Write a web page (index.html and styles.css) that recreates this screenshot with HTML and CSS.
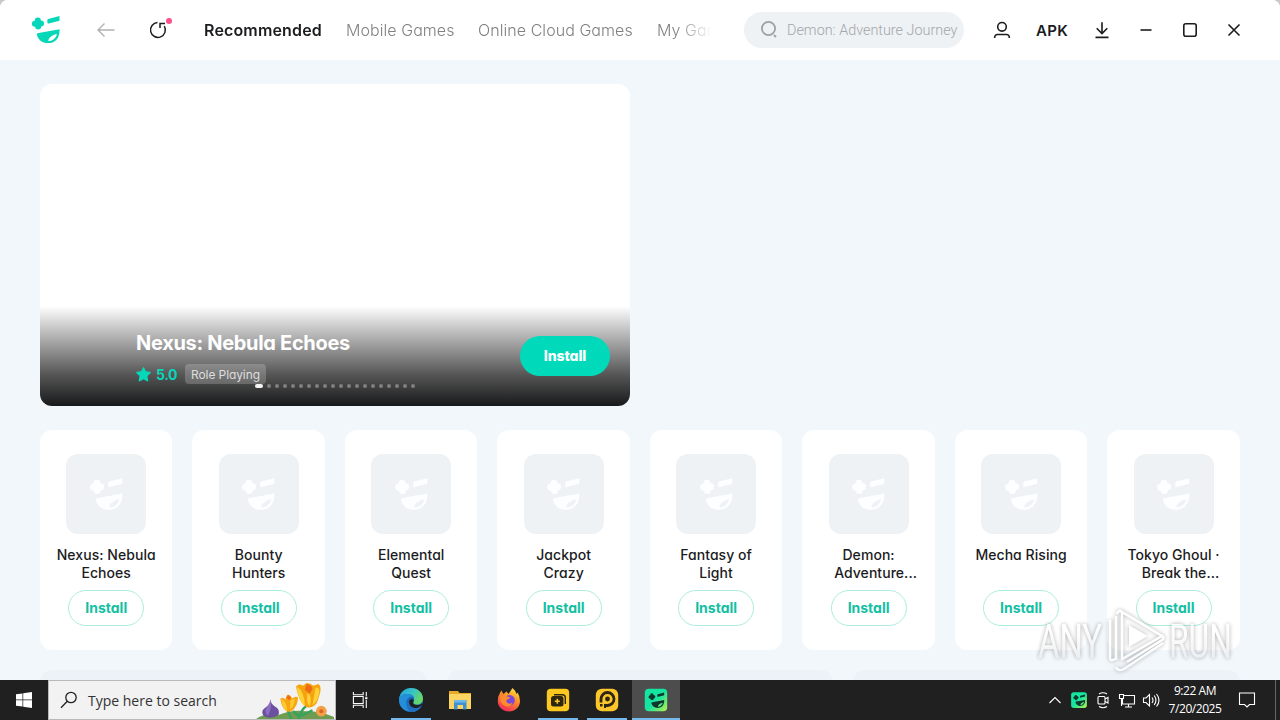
FILE: index.html
```html
<!DOCTYPE html>
<html lang="en">
<head>
    <meta charset="UTF-8">
    <meta name="viewport" content="width=device-width, initial-scale=1.0">
    <title>Game Center</title>
    <link rel="stylesheet" href="styles.css">
</head>
<body>

<svg class="defs" width="0" height="0">
    <symbol id="face" viewBox="0 0 30 30">
        <circle cx="6.800" cy="5.400" r="3"/>
        <circle cx="10" cy="8.400" r="3"/>
        <circle cx="7.200" cy="11.600" r="3"/>
        <circle cx="3.900" cy="8.800" r="3"/>
        <path d="M4.500 6l4.800-.2 1 5-5 1.200z"/>
        <path d="M17.200 3.900 28.500 1v4.800l-10.600 2.700c-1 .2-1.500-.1-1.500-1V5c0-.6.300-1 .8-1.100z"/>
        <path fill-rule="evenodd" d="M7.600 17.900l21-3.700c.2 8.500-3.900 13.900-11.500 13.900-5.500 0-9.400-2.700-11.200-8.200-.3-1.100.4-1.800 1.700-2zM17.300 25.700c2.700 1 7.800-1.800 8.600-6.700-3.700.7-8.100 3.200-8.600 6.700z"/>
    </symbol>
</svg>

<div class="window">
    <header class="topbar">
        <svg class="logo"><use href="#face"/></svg>
        <svg class="back" viewBox="0 0 20 20"><path d="M18.500 10H2M8.500 3.500L2 10l6.500 6.500"/></svg>
        <div class="refresh">
            <svg viewBox="0 0 20 20"><path d="M9.500 2.600A7.400 7.400 0 1 0 16.300 6.200M12 8V3.400h5"/></svg>
            <span class="dot"></span>
        </div>
        <nav class="tabs">
            <a class="tab active">Recommended</a>
            <a class="tab mobile">Mobile Games</a>
            <a class="tab cloud">Online Cloud Games</a>
            <a class="tab">My Games</a>
        </nav>
        <div class="search">
            <svg viewBox="0 0 20 20"><circle cx="9.500" cy="8.500" r="6.600"/><path d="M15 15l2 2"/></svg>
            <span>Demon: Adventure Journey</span>
        </div>
        <div class="controls">
            <svg viewBox="0 0 20 20"><circle cx="10" cy="6.800" r="4.300"/><path d="M2.700 18v-.8a2.700 2.700 0 0 1 2.700-2.700h9.200a2.700 2.700 0 0 1 2.700 2.700v.8"/></svg>
            <span class="apk">APK</span>
            <svg viewBox="0 0 20 20"><path d="M10 2.300v11M4.700 8.200l5.300 5.300 5.300-5.300M3.500 17.400h13"/></svg>
            <svg viewBox="0 0 20 20"><path d="M4.500 10h11"/></svg>
            <svg viewBox="0 0 20 20"><rect x="3.800" y="3.800" width="12.400" height="12.400" rx="2"/></svg>
            <svg viewBox="0 0 20 20"><path d="M4.500 4.500l11 11M15.500 4.500l-11 11"/></svg>
        </div>
    </header>

    <main class="content">
        <section class="hero">
            <div class="hero-info">
                <div>
                    <h1>Nexus: Nebula Echoes</h1>
                    <div class="meta">
                        <svg class="star" viewBox="0 0 16 16"><path d="M7.200.8c.3-.7 1.300-.7 1.600 0l1.700 3.800 4.400.5c.8.100 1.100 1 .5 1.500l-3.200 3 .9 4.700c.1.800-.6 1.300-1.300.9L8 13l-3.800 2.200c-.7.400-1.500-.1-1.300-.9l.8-4.600L.500 6.600c-.5-.5-.2-1.400.5-1.500l4.400-.5z"/></svg>
                        <span class="score">5.0</span>
                        <span class="tag">Role Playing</span>
                    </div>
                </div>
                <button class="install-main">Install</button>
            </div>
            <div class="pager">
                <i class="on"></i><i></i><i></i><i></i><i></i><i></i><i></i><i></i><i></i><i></i>
                <i></i><i></i><i></i><i></i><i></i><i></i><i></i><i></i><i></i><i></i>
            </div>
        </section>

        <section class="games">
            <article class="card">
                <div class="thumb"><svg><use href="#face"/></svg></div>
                <h2>Nexus: Nebula<br>Echoes</h2>
                <button>Install</button>
            </article>
            <article class="card">
                <div class="thumb"><svg><use href="#face"/></svg></div>
                <h2>Bounty<br>Hunters</h2>
                <button>Install</button>
            </article>
            <article class="card">
                <div class="thumb"><svg><use href="#face"/></svg></div>
                <h2>Elemental<br>Quest</h2>
                <button>Install</button>
            </article>
            <article class="card">
                <div class="thumb"><svg><use href="#face"/></svg></div>
                <h2>Jackpot<br>Crazy</h2>
                <button>Install</button>
            </article>
            <article class="card">
                <div class="thumb"><svg><use href="#face"/></svg></div>
                <h2>Fantasy of<br>Light</h2>
                <button>Install</button>
            </article>
            <article class="card">
                <div class="thumb"><svg><use href="#face"/></svg></div>
                <h2>Demon:<br><span class="cut">Adventure...</span></h2>
                <button>Install</button>
            </article>
            <article class="card">
                <div class="thumb"><svg><use href="#face"/></svg></div>
                <h2>Mecha Rising</h2>
                <button>Install</button>
            </article>
            <article class="card">
                <div class="thumb"><svg><use href="#face"/></svg></div>
                <h2>Tokyo Ghoul ·<br><span class="cut">Break the...</span></h2>
                <button>Install</button>
            </article>
        </section>

        <section class="lists">
            <div class="list"></div>
            <div class="list"></div>
            <div class="list"></div>
        </section>
    </main>
</div>

<!-- watermark -->
<svg class="watermark" viewBox="0 0 210 74">
    <defs>
        <linearGradient id="fade" x2="0" y2="1"><stop offset=".3" stop-color="#fff"/><stop offset="1" stop-color="#dfe2e5"/></linearGradient>
    </defs>
    <g class="mark-text">
        <text x="8" y="54" textLength="64" lengthAdjust="spacingAndGlyphs">ANY</text>
        <text x="139" y="54" textLength="63" lengthAdjust="spacingAndGlyphs">RUN</text>
    </g>
    <g class="mark-line">
        <path d="M86 12v44M80 16v38q0 4 5 1M92 8v47l40-23zM92 8q-3-3-5 2M132 32q3 1 0 4L97 58M133 39L94 65q-6 3-8-2"/>
    </g>
    <path class="mark-fill" d="M99 21v22l19-11z"/>
</svg>

<footer class="taskbar">
    <div class="start">
        <svg viewBox="0 0 16 16"><path d="M0 2.300l6.500-.9v6.200H0zM7.200 1.300L16 0v7.600H7.200zM0 8.300h6.500v6.300L0 13.700zM7.200 8.300H16V16l-8.800-1.300z"/></svg>
    </div>
    <div class="taskbar-search">
        <svg class="lens" viewBox="0 0 18 18"><circle cx="11" cy="6.500" r="5.200"/><path d="M7.300 10.200L1 16.700"/></svg>
        <span>Type here to search</span>
        <svg class="flowers" viewBox="0 0 80 39">
            <path fill="#6f9c50" d="M0 39q9-7 23-4 14-6 28-4 16 0 29 6v2z"/>
            <path fill="none" stroke="#37a35c" stroke-width="2.500" d="M36 39l-4-11M44 39q1-8 8-14M44 36l-6-5M46 36l12-6"/>
            <path fill="#6b4fa0" d="M15 19q-1 6-5 8-6 4-2 9 7 4 15-1 2-6-4-9-4-3-4-7z"/>
            <path fill="#8d70bd" d="M15 19q2 8-3 17-4-4-1-9 3-3 4-8z"/>
            <path fill="#f8a513" d="M25 18q3-2 5 1l2-5q4 0 5 4 4-3 6-1 0 6-3 10-3 6-9 4-5-4-6-13z"/>
            <path fill="#fccb2d" d="M26 18q6 4 6 13-5-2-6-13zM35 20l5-2q-1 9-5 11z"/>
            <path fill="#f5a30e" d="M41 6q3-4 7-1l4-3q4 0 7 3l5-2q3 2 2 8-2 8-4 12-4 5-10 4-8-5-11-21z"/>
            <path fill="#ffd23a" d="M42 6q8 5 8 20-7-5-8-20zM53 12q5 3 2 14-4-5-2-14zM61 7q4-1 4 4-1 9-7 14z"/>
            <path fill="#ef6c16" d="M52 3q5 1 6 5l-3 5-5-4zM33 14l3 3-2 3-3-3z"/>
            <circle cx="67" cy="31" r="5.500" fill="#f3a046"/><circle cx="67" cy="31" r="2" fill="#db6424"/>
        </svg>
    </div>
    <div class="apps">
        <div class="app">
            <svg class="taskview" viewBox="0 0 18 18"><path d="M1 0v3h11V0M1 18v-3h11v3M1 5h11v8H1zM15.500 0v5M15.500 9v9"/><path stroke-width="2.200" d="M14.200 7h2.600"/></svg>
        </div>
        <div class="app open">
            <svg class="i24" viewBox="0 0 24 24">
                <defs>
                    <linearGradient id="edgeTop" x1="0" y1="0" x2="1" y2=".4"><stop offset="0" stop-color="#239fe0"/><stop offset=".6" stop-color="#39c6c4"/><stop offset="1" stop-color="#66d667"/></linearGradient>
                </defs>
                <circle cx="12" cy="12" r="12" fill="#1768b8"/>
                <path fill="url(#edgeTop)" d="M0 11.500C1 4 6 0 12 0c7 0 12 5 12 10.500 0 4-3 6-6 6-3.500 0-4.500-1.500-3.500-3 2-4-1-7.500-6-7.500-4 0-7.500 2-8.500 5.500z"/>
                <path fill="#248fd8" d="M0 12c0-4 4-6 8-6 3 0 5 1 6 3-3-1-6 1-6.500 4-.7 5 3.500 9 8.500 9.300C8 26 0 20 0 12z"/>
                <path fill="#202020" d="M14.500 13.500c-1 2 .5 3.500 4 3.500 1.500 0 3-.4 4-1.200.8-.5 1.300 0 .8.900-2 2.600-4.700 3.300-7.300 3.300-4 0-6.500-3-6-6 .3-2 1.500-3 2.700-3 1.500 0 2.400 1 1.800 2.500z"/>
                <path fill="#1f6fbe" d="M10 14c0 3.500 3 6.400 7 6.200 2.300-.1 4.700-1.200 5.800-2.800C21 21.500 17 24 12.500 24 9 23 7 19 7.500 15z"/>
            </svg>
        </div>
        <div class="app">
            <svg class="i24" viewBox="0 0 24 24"><path fill="#e9a928" d="M1 3h9l1.500 2H23v4H1z"/><path fill="#fcd462" d="M1 6h22v15H1z"/><path fill="#3f91d2" d="M6 12h12.500v9.500H15V17H9.500v4.500H6z"/><path fill="#6db7eb" d="M6 12h12.500v2.500H6z"/></svg>
        </div>
        <div class="app">
            <svg class="i24" viewBox="0 0 24 24">
                <defs><linearGradient id="fox" x1=".8" y1="0" x2=".3" y2="1"><stop offset="0" stop-color="#ffe845"/><stop offset=".4" stop-color="#ff9427"/><stop offset="1" stop-color="#f2285c"/></linearGradient></defs>
                <path fill="url(#fox)" d="M3 5l1.200-2.500L6.500 6l3-2.500 2 2.500 2-3 2-3q3 2.500 4 6l1-1.500Q23 8 23 13c0 6-5 10.500-11 10.500S.8 19 .8 13Q.8 8 3 5z"/>
                <circle cx="12.500" cy="12.300" r="5.300" fill="#7a48d8"/>
                <path fill="#ff8b2c" d="M3 9q3-3 7-.5 2 .5 3 1-.5 2-3 2-1.500 2 .5 3.500 3 1.500 5-.5-1 4-5.500 4C5 18 3 13 3 9z"/>
            </svg>
        </div>
        <div class="app open">
            <svg class="i24" viewBox="0 0 24 24"><rect x=".8" y=".8" width="22.400" height="22.400" rx="4" fill="#fdc81f"/><path fill="none" stroke="#2c2613" stroke-width="1.400" d="M8 6.700h8.500q2.800 0 2.800 2.800v6.500"/><rect x="5" y="8" width="12.500" height="10.500" rx="2.500" fill="#2c2613"/><path stroke="#fdc81f" stroke-width="1.500" d="M11.300 10.700v5M8.800 13.200h5"/></svg>
        </div>
        <div class="app open">
            <svg class="i24" viewBox="0 0 24 24"><rect x=".8" y=".8" width="22.400" height="22.400" rx="6" fill="#fdc62b"/><path fill="none" stroke="#2c2613" stroke-width="2.800" d="M6 14.500V11a6.500 6.500 0 1 1 6.500 6.500H10"/><circle cx="12.500" cy="11" r="2.400" fill="#2c2613"/><path fill="#2c2613" d="M5 16h2.500v2.500H5zM9 16h2v4H9z"/></svg>
        </div>
        <div class="app open current">
            <svg class="i24 game" viewBox="0 0 24 24"><defs><linearGradient id="gc" x2="1" y2="1"><stop offset=".5" stop-color="#14e6a1"/><stop offset="1" stop-color="#b8f04c"/></linearGradient></defs><rect x=".8" y=".8" width="22.400" height="22.400" rx="4" fill="url(#gc)"/><use href="#face" x="4" y="4" width="17" height="17"/></svg>
        </div>
    </div>
    <div class="tray">
        <svg viewBox="0 0 18 18"><path d="M3.500 12L9 6.500l5.500 5.500"/></svg>
        <svg class="game" viewBox="0 0 24 24"><rect x="1.500" y="1.500" width="21" height="21" rx="3.500" fill="url(#gc)"/><use href="#face" x="4" y="4" width="17" height="17"/></svg>
        <svg viewBox="0 0 18 18"><rect x="4" y="5.500" width="7" height="7.500" rx="1"/><path d="M11 8l3-1.500V12l-3-1.500M5 3q4-2.500 8 0M5 15.500q4 2.500 8 0"/></svg>
        <svg viewBox="0 0 18 18"><path d="M5.500 4.500h11V13H4.500V8M10.500 13v3M7 16h7M1.500 3.500h4v4h-4zM3.500 7.500V15"/></svg>
        <svg viewBox="0 0 18 18"><path d="M1.500 7v4.500H4l3.500 3.500V3.500L4 7zM10 6.500q2 2.700 0 5.500M12.200 4.500q3.500 4.700 0 9.500M14.500 3q5 6.200 0 12.500"/></svg>
        <div class="clock">9:22 AM<br>7/20/2025</div>
        <svg class="note" viewBox="0 0 18 18"><path d="M1.500 2h15v11.500h-5L9 16l-2.500-2.500h-5z"/></svg>
    </div>
</footer>

</body>
</html>
```
FILE: styles.css
```css
* {
    box-sizing: border-box;
}

body {
    margin: 0;
    width: 1280px;
    height: 720px;
    overflow: hidden;
    background: #c8c8c8;
    font-family: Inter, "Open Sans", sans-serif;
    font-feature-settings: "cv11";
    color: #1b1c1e;
}

.defs {
    position: absolute;
}

svg {
    display: block;
    flex: none;
}

button {
    font: inherit;
    padding: 0;
    cursor: pointer;
}

.window {
    height: 680px;
    overflow: hidden;
    border-radius: 8px 8px 0 0;
    background: #f2f7fb;
}

/* top bar */
.topbar {
    display: flex;
    align-items: center;
    height: 60px;
    padding-left: 31px;
    background: #fff;
}

.logo {
    width: 30px;
    height: 30px;
    fill: #06d7b9;
}

.back {
    width: 20px;
    height: 20px;
    margin-left: 35px;
    fill: none;
    stroke: #b0b1b3;
    stroke-width: 1.4;
}

.refresh {
    position: relative;
    margin-left: 32px;
}

.refresh svg {
    width: 20px;
    height: 20px;
    fill: none;
    stroke: #1b1c1e;
    stroke-width: 1.5;
}

.refresh .dot {
    position: absolute;
    top: -2px;
    right: -4px;
    width: 6px;
    height: 6px;
    border-radius: 50%;
    background: #ff5087;
}

.tabs {
    display: flex;
    gap: 24px;
    width: 508px;
    margin-left: 36px;
    overflow: hidden;
    white-space: nowrap;
    -webkit-mask-image: linear-gradient(90deg, #000 472px, transparent 508px);
    mask-image: linear-gradient(90deg, #000 472px, transparent 508px);
}

.tab {
    flex: none;
    font-size: 16px;
    line-height: 24px;
    font-weight: 300;
    letter-spacing: .06px;
    color: #808183;
}

.tab.active {
    width: 118px;
    font-weight: 600;
    letter-spacing: .15px;
    color: #1b1c1e;
}

.tab.mobile {
    width: 108px;
}

.tab.cloud {
    width: 155px;
}

.search {
    display: flex;
    align-items: center;
    gap: 8px;
    width: 220px;
    height: 36px;
    margin-left: 32px;
    padding-left: 15px;
    border-radius: 18px;
    background: #eef2f5;
    font: 300 14.4px Roboto, "Liberation Sans", sans-serif;
    color: #a2a6aa;
    white-space: nowrap;
}

.search svg {
    width: 20px;
    height: 20px;
    fill: none;
    stroke: #9da1a4;
    stroke-width: 1.8;
}

.controls {
    display: flex;
    align-items: center;
    gap: 24px;
    margin-left: 28px;
}

.controls svg {
    width: 20px;
    height: 20px;
    fill: none;
    stroke: #1b1c1e;
    stroke-width: 1.6;
}

.apk {
    width: 32px;
    font-size: 15px;
    font-weight: 600;
    letter-spacing: .3px;
}

/* banner */
.content {
    padding: 24px 40px 0;
}

.hero {
    display: flex;
    flex-direction: column;
    justify-content: flex-end;
    position: relative;
    width: 590px;
    height: 322px;
    border-radius: 12px;
    background: #fff;
    overflow: hidden;
}

.hero-info {
    display: flex;
    justify-content: space-between;
    height: 100px;
    padding: 24px 20px 0 96px;
    background: linear-gradient(#fff, #aaa 34%, #555 69%, #18191b);
}

.hero h1 {
    margin: 0;
    font-size: 20px;
    line-height: 26px;
    font-weight: 700;
    letter-spacing: -.31px;
    color: #fff;
}

.meta {
    display: flex;
    align-items: center;
    height: 20px;
    margin-top: 8px;
}

.star {
    width: 15px;
    height: 15px;
    fill: #06d7b9;
}

.score {
    width: 29px;
    margin-left: 5px;
    font-size: 14px;
    font-weight: 700;
    letter-spacing: -.5px;
    color: #06d7b9;
}

.tag {
    width: 81px;
    height: 20px;
    border-radius: 4px;
    background: rgba(255, 255, 255, .2);
    font-size: 12px;
    line-height: 21px;
    letter-spacing: -.1px;
    text-align: center;
    color: #ddd;
    white-space: nowrap;
}

.install-main {
    width: 90px;
    height: 40px;
    margin-top: 6px;
    padding-bottom: 1px;
    border: 0;
    border-radius: 20px;
    background: #00dabb;
    font-size: 14px;
    font-weight: 800;
    letter-spacing: -.1px;
    color: #fff;
}

.pager {
    position: absolute;
    left: 215px;
    bottom: 18px;
    display: flex;
    gap: 4px;
}

.pager i {
    width: 4px;
    height: 4px;
    border-radius: 2px;
    background: #808080;
}

.pager .on {
    width: 8px;
    background: #f5f5f5;
}

/* game cards */
.games {
    display: grid;
    grid-template-columns: repeat(8, 132.48px);
    gap: 20px;
    margin-top: 24px;
}

.card {
    display: flex;
    flex-direction: column;
    align-items: center;
    height: 220px;
    padding-top: 24px;
    border-radius: 12px;
    background: #fff;
}

.thumb {
    display: flex;
    align-items: center;
    justify-content: center;
    width: 80px;
    height: 80px;
    border-radius: 12px;
    background: #eef2f5;
}

.thumb svg {
    width: 35px;
    height: 35px;
    fill: #fcfeff;
}

/* the symbol scales with its svg box */
.thumb use {
    width: 100%;
    height: 100%;
}

.card h2 {
    height: 36px;
    margin: 12px 0 8px;
    font-size: 14px;
    line-height: 18px;
    font-weight: 500;
    letter-spacing: .05px;
    text-align: center;
    white-space: nowrap;
}

.cut {
    position: relative;
    left: 7px;
}

.card button {
    width: 76px;
    height: 36px;
    padding-bottom: 1px;
    border: 1px solid #abeede;
    border-radius: 18px;
    background: #fff;
    font-size: 14px;
    font-weight: 700;
    color: #14bfa3;
}

.lists {
    display: grid;
    grid-template-columns: repeat(3, 1fr);
    gap: 20px;
    margin-top: 20px;
}

.list {
    height: 200px;
    border-radius: 12px;
    background: #edf2f8;
}

.watermark {
    position: absolute;
    left: 1030px;
    top: 604px;
    width: 210px;
    height: 74px;
    filter: drop-shadow(0 0 2px rgba(0, 0, 0, .5));
    opacity: .65;
}

.mark-text {
    font: 400 48px Roboto, sans-serif;
    fill: url(#fade);
}

.mark-line {
    fill: none;
    stroke: #fff;
    stroke-width: 2.5;
}

.mark-fill {
    fill: #fff;
}

/* taskbar */
.taskbar {
    display: flex;
    height: 40px;
    background: #202020;
    font-family: "Open Sans", "Noto Sans", sans-serif;
    font-feature-settings: normal;
    color: #fff;
}

.start {
    display: flex;
    align-items: center;
    justify-content: center;
    width: 48px;
}

.start svg {
    width: 16px;
    height: 16px;
    fill: #fff;
}

.taskbar-search {
    display: flex;
    align-items: center;
    width: 288px;
    padding-left: 11px;
    border: 1px solid #b9b9b9;
    background: #f2f2f2;
    font-size: 14px;
    color: #333;
    white-space: nowrap;
}

.taskbar-search .lens {
    width: 18px;
    height: 18px;
    margin-right: 10px;
    fill: none;
    stroke: #222;
    stroke-width: 1.3;
}

.taskbar-search .flowers {
    width: 80px;
    height: 38px;
    margin-left: auto;
}

.apps {
    display: flex;
    gap: 1px;
}

.app {
    display: flex;
    align-items: center;
    justify-content: center;
    width: 48px;
}

.app:first-child {
    margin-right: 2px;
}

.app.open {
    background: linear-gradient(#76b9ed, #76b9ed) center bottom / 40px 2px no-repeat;
}

.app.current {
    background: linear-gradient(#76b9ed, #76b9ed) center bottom / 48px 2px no-repeat #4d4d4d;
}

.i24 {
    width: 24px;
    height: 24px;
}

.taskview {
    width: 17px;
    height: 16px;
    fill: none;
    stroke: #fff;
    stroke-width: 1.2;
}

.game {
    fill: #10372d;
}

.tray {
    display: flex;
    align-items: center;
    gap: 6px;
    margin-left: auto;
    margin-right: 4px;
    padding-right: 19px;
    border-right: 1px solid #666;
}

.tray svg {
    width: 18px;
    height: 18px;
}

.tray svg:not(.game) {
    fill: none;
    stroke: #fff;
    stroke-width: 1.1;
}

.clock {
    width: 58px;
    font-size: 12px;
    line-height: 18px;
    letter-spacing: -.45px;
    text-align: center;
    white-space: nowrap;
}

.tray .note {
    margin-left: 8px;
}
```
